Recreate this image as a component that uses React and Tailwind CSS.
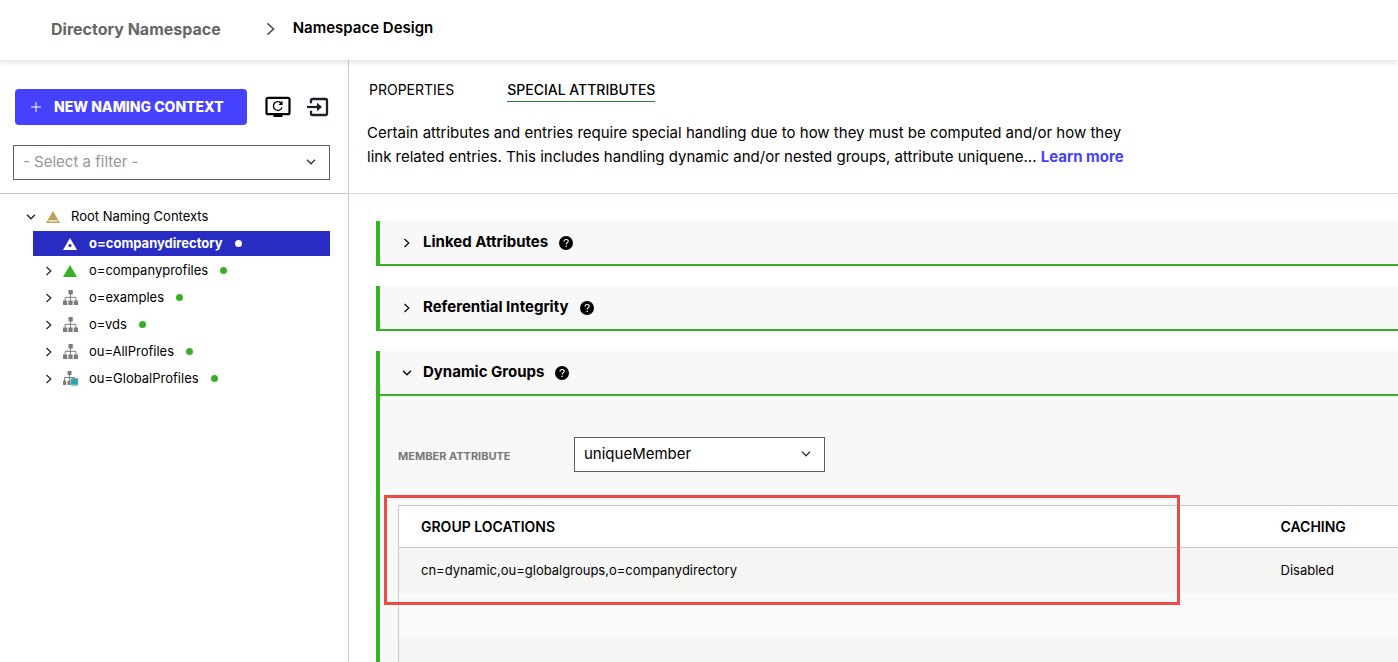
import React from "react";

const ChevronRight = ({ className }) => (
  <svg aria-hidden="true" viewBox="0 0 8 10" fill="none" stroke="currentColor" className={className}>
    <path d="M1.5 1 5.8 5 1.5 9" strokeWidth="1.2" />
  </svg>
);

const ChevronDown = ({ className }) => (
  <svg aria-hidden="true" viewBox="0 0 10 8" fill="none" stroke="currentColor" className={className}>
    <path d="M1 1.8 5 5.8 9 1.8" strokeWidth="1.3" />
  </svg>
);

const MonitorRefreshIcon = () => (
  <svg aria-hidden="true" viewBox="0 0 26 22" className="h-[22px] w-[26px]">
    <rect x="1.5" y="1.8" width="23" height="16.4" rx="1.5" fill="none" stroke="#000" strokeWidth="2.2" />
    <rect x="8.5" y="18" width="9" height="3" fill="#000" />
    <path d="M16.4 7.4A4.4 4.4 0 1 0 17 11.4" fill="none" stroke="#000" strokeWidth="1.3" />
    <path d="M17.5 4.8V9h-4.2z" fill="#000" />
  </svg>
);

const ImportIcon = () => (
  <svg aria-hidden="true" viewBox="0 0 22 20" className="h-5 w-[22px]" fill="none" stroke="#1a1f2b">
    <path d="M4 6.2V3.5Q4 2 5.5 2H18.5Q20 2 20 3.5V16.5Q20 18 18.5 18H5.5Q4 18 4 16.5V13.8" strokeWidth="2.3" />
    <path d="M0 10H12" strokeWidth="2.2" />
    <path d="M10 5.8 15 10 10 14.2Z" fill="#1a1f2b" stroke="none" />
  </svg>
);

const HelpIcon = () => (
  <svg aria-hidden="true" viewBox="0 0 14 14" className="h-3.5 w-3.5">
    <circle cx="7" cy="7" r="7" fill="#000" />
    <path d="M5 5.5C5 4.2 5.9 3.5 7.1 3.5S9.2 4.2 9.2 5.3C9.2 6.7 7.2 6.7 7.2 8.4" fill="none" stroke="#fff" strokeWidth="1.1" />
    <rect x="6.5" y="9.7" width="1.3" height="1.3" fill="#fff" />
  </svg>
);

const TREE_ICONS = {
  root: (
    <svg aria-hidden="true" viewBox="0 0 14 12" className="h-3 w-3.5">
      <path d="M7 0 14 12H0z" fill="#c0a15c" />
      <rect x="2.5" y="9.3" width="9" height="1.2" fill="#fff" />
    </svg>
  ),
  dotted: (
    <svg aria-hidden="true" viewBox="0 0 14 12" className="h-3 w-3.5">
      <path d="M7 0 14 12H0z" fill="#fff" />
      <circle cx="7" cy="7.6" r="1.5" fill="#282cc3" />
    </svg>
  ),
  solid: (
    <svg aria-hidden="true" viewBox="0 0 14 12" className="h-3 w-3.5">
      <path d="M7 0 14 12H0z" fill="#37b224" />
    </svg>
  ),
  tree: (
    <svg aria-hidden="true" viewBox="0 0 46 46" className="h-[15px] w-[15px]">
      <path d="M17 0h13v14H17zM0 32h13v14H0zM16.5 32h13v14h-13zM33 32h13v14H33z" fill="#7b7b7b" />
      <path d="M23 12V33M6.5 33V22.5H39.5V33" fill="none" stroke="#7b7b7b" strokeWidth="3" />
    </svg>
  ),
  treeStore: (
    <svg aria-hidden="true" viewBox="0 0 46 46" className="h-[15px] w-[15px]">
      <path d="M14 0h12v12H14zM0 30h10v13H0zM14 30h9v13H14z" fill="#7b7b7b" />
      <path d="M20 10V31M5 31V20H35V24" fill="none" stroke="#7b7b7b" strokeWidth="3" />
      <path d="M27 22H46V42H24V25Z" fill="#33a0b0" />
      <path d="M25 44H46" stroke="#33a0b0" strokeWidth="2" />
    </svg>
  ),
};

const CONTEXTS = [
  { name: "o=companydirectory", icon: "dotted", selected: true },
  { name: "o=companyprofiles", icon: "solid" },
  { name: "o=examples", icon: "tree" },
  { name: "o=vds", icon: "tree" },
  { name: "ou=AllProfiles", icon: "tree" },
  { name: "ou=GlobalProfiles", icon: "treeStore" },
];

function SelectBox({ id, label, className, options }) {
  return (
    <div className="relative">
      <select
        id={id}
        aria-label={label}
        className={`block h-[35px] w-full appearance-none rounded-none border border-[#5f5f5f] bg-white pl-[9px] pr-8 text-[15px] ${className}`}
      >
        {options.map((option) => (
          <option key={option}>{option}</option>
        ))}
      </select>
      <ChevronDown className="pointer-events-none absolute right-3.5 top-[13px] h-2 w-2.5 text-[#333]" />
    </div>
  );
}

function TreeNode({ node }) {
  return (
    <li className="flex h-[27px] items-center">
      <button
        type="button"
        className={`flex h-[25px] w-full items-center pl-3 text-left text-[13px] ${
          node.selected ? "bg-[#282cc3] font-bold text-white" : "text-black"
        }`}
      >
        <span className="w-[18px]">
          {!node.selected && <ChevronRight className="h-2.5 w-2 text-[#222]" />}
        </span>
        <span className="w-[26px]">{TREE_ICONS[node.icon]}</span>
        {node.name}
        <span className={`ml-3 h-[7px] w-[7px] rounded-full ${node.selected ? "bg-white" : "bg-[#37b224]"}`} />
      </button>
    </li>
  );
}

function Section({ title, open, children }) {
  return (
    <section className="border-l-4 border-[#37b224] bg-[#f8f8f8]">
      <div className="flex h-[45px] items-center gap-[11px] border-b-2 border-[#37b224] pl-[22px]">
        <h2>
          <button type="button" aria-expanded={!!open} className="flex items-center text-[15px] font-bold">
            <span className="flex w-[21px]">
              {open ? <ChevronDown className="h-2 w-2.5" /> : <ChevronRight className="ml-px h-2.5 w-2" />}
            </span>
            {title}
          </button>
        </h2>
        <button type="button" aria-label={`About ${title}`}>
          <HelpIcon />
        </button>
      </div>
      {children}
    </section>
  );
}

function GroupTable() {
  return (
    <table className="w-full table-fixed border-collapse border-l border-t border-[#c8c8c8] text-left text-[13px]">
      <colgroup>
        <col className="w-[860px]" />
        <col />
      </colgroup>
      <thead>
        <tr className="h-[42px] border-b border-[#c8c8c8] bg-white text-sm">
          <th scope="col" className="pl-[22px] font-semibold">GROUP LOCATIONS</th>
          <th scope="col" className="pl-[22px] font-semibold">CACHING</th>
        </tr>
      </thead>
      <tbody>
        <tr className="h-[45px] bg-[#f5f5f4]">
          <td className="pl-[22px]">cn=dynamic,ou=globalgroups,o=companydirectory</td>
          <td className="pl-[22px]">Disabled</td>
        </tr>
        <tr className="h-[45px] bg-[#fafafa]">
          <td />
          <td />
        </tr>
        <tr className="h-[45px] bg-[#f5f5f4]">
          <td />
          <td />
        </tr>
      </tbody>
    </table>
  );
}

export default function App() {
  return (
    <div className="flex h-screen flex-col overflow-hidden bg-white font-['Inter',sans-serif] text-black">
      <header className="z-10 flex h-[60px] shrink-0 items-center bg-white pb-[3px] pl-[51px] shadow-[0_4px_4px_rgba(0,0,0,0.08)]">
        <nav aria-label="Breadcrumb" className="flex items-center text-[15px] font-semibold">
          <a href="#directory" className="text-base font-bold text-[#666]">Directory Namespace</a>
          <ChevronRight className="ml-11 mr-4 h-3.5 w-3 text-[#555]" />
          <span aria-current="page">Namespace Design</span>
        </nav>
      </header>

      <div className="flex min-h-0 flex-1">
        <aside className="w-[349px] shrink-0 border-r border-[#c8c8c8]">
          <div className="h-[134px] border-b border-[#c8c8c8] pl-[13px] pr-[18px] pt-[29px]">
            <div className="flex items-center pl-0.5">
              <button
                type="button"
                className="flex h-9 w-[232px] items-center rounded bg-[#4640ff] pl-4 text-sm font-extrabold text-white"
              >
                <svg aria-hidden="true" viewBox="0 0 10 10" className="mr-[13px] h-2.5 w-2.5" stroke="#fff">
                  <path d="M5 0V10M0 5H10" />
                </svg>
                NEW NAMING CONTEXT
              </button>
              <button type="button" aria-label="Refresh" className="ml-[18px]">
                <MonitorRefreshIcon />
              </button>
              <button type="button" aria-label="Import" className="ml-4">
                <ImportIcon />
              </button>
            </div>
            <div className="mt-5">
              <SelectBox label="Filter" options={["- Select a filter -"]} className="text-[#969696]" />
            </div>
          </div>

          <div className="pl-[26px] pr-[18px] pt-[9px]">
            <button type="button" className="flex h-[27px] items-center text-[13px]">
              <ChevronDown className="mr-2.5 h-2 w-2.5 text-[#222]" />
              <span className="w-[25px]">{TREE_ICONS.root}</span>
              Root Naming Contexts
            </button>
            <ul className="pl-[7px]">
              {CONTEXTS.map((node) => (
                <TreeNode key={node.name} node={node} />
              ))}
            </ul>
          </div>
        </aside>

        <main className="min-w-0 flex-1 overflow-hidden">
          <div className="h-[134px] border-b border-[#cfe8cf] pl-[18px] pt-5">
            <nav aria-label="Views" className="flex gap-[53px] pl-0.5 text-sm">
              <a href="#properties" className="h-[22px]">PROPERTIES</a>
              <a href="#special" aria-current="page" className="h-[22px] border-b border-[#2f7d2a] font-medium">
                SPECIAL ATTRIBUTES
              </a>
            </nav>
            <p className="mt-[19px] max-w-[770px] text-[15px] leading-6">
              Certain attributes and entries require special handling due to how they must be computed and/or how they
              <br />
              link related entries. This includes handling dynamic and/or nested groups, attribute uniquene...{" "}
              <a href="#learn" className="font-bold text-[#4640ff]">Learn more</a>
            </p>
          </div>

          <div className="flex flex-col gap-5 pl-[27px] pt-[27px]">
            <Section title="Linked Attributes" />
            <Section title="Referential Integrity" />
            <Section title="Dynamic Groups" open>
              <div className="pl-[18px] pt-[41px]">
                <div className="flex items-center">
                  <label htmlFor="member" className="w-[176px] pt-1 text-[11px] font-bold text-[#777]">
                    MEMBER ATTRIBUTE
                  </label>
                  <div className="w-[251px]">
                    <SelectBox id="member" options={["uniqueMember"]} className="text-black" />
                  </div>
                </div>
                <div className="relative mt-[33px]">
                  <GroupTable />
                  <div className="pointer-events-none absolute -left-3.5 -top-2.5 h-[110px] w-[796px] border-[3px] border-[#ec4b45]" />
                </div>
              </div>
            </Section>
          </div>
        </main>
      </div>
    </div>
  );
}
